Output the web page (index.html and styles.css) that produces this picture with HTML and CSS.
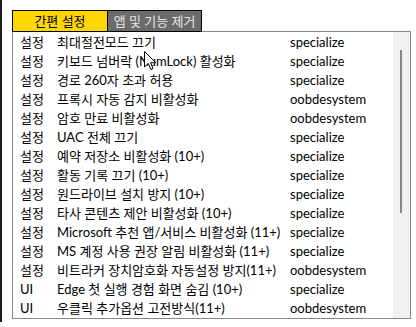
FILE: index.html
```html
<!DOCTYPE html>
<html lang="ko">
<head>
    <meta charset="UTF-8">
    <title>간편 설정</title>
    <link rel="stylesheet" href="styles.css">
</head>
<body>
    <div class="window">
        <div class="tabs">
            <div class="tab active">간편 설정</div>
            <div class="tab">앱 및 기능 제거</div>
        </div>
        <div class="listbox">
            <div class="rows">
                <div class="row"><span>설정</span><span>최대절전모드 끄기</span><span>specialize</span></div>
                <div class="row"><span>설정</span><span>키보드 넘버락 (NumLock) 활성화</span><span>specialize</span></div>
                <div class="row"><span>설정</span><span>경로 260자 초과 허용</span><span>specialize</span></div>
                <div class="row"><span>설정</span><span>프록시 자동 감지 비활성화</span><span>oobdesystem</span></div>
                <div class="row"><span>설정</span><span>암호 만료 비활성화</span><span>oobdesystem</span></div>
                <div class="row"><span>설정</span><span>UAC 전체 끄기</span><span>specialize</span></div>
                <div class="row"><span>설정</span><span>예약 저장소 비활성화 (10+)</span><span>specialize</span></div>
                <div class="row"><span>설정</span><span>활동 기록 끄기 (10+)</span><span>specialize</span></div>
                <div class="row"><span>설정</span><span>원드라이브 설치 방지 (10+)</span><span>specialize</span></div>
                <div class="row"><span>설정</span><span>타사 콘텐츠 제안 비활성화 (10+)</span><span>specialize</span></div>
                <div class="row"><span>설정</span><span>Microsoft 추천 앱/서비스 비활성화 (11+)</span><span>specialize</span></div>
                <div class="row"><span>설정</span><span>MS 계정 사용 권장 알림 비활성화 (11+)</span><span>specialize</span></div>
                <div class="row"><span>설정</span><span>비트라커 장치암호화 자동설정 방지(11+)</span><span>oobdesystem</span></div>
                <div class="row"><span>UI</span><span>Edge 첫 실행 경험 화면 숨김 (10+)</span><span>specialize</span></div>
                <div class="row"><span>UI</span><span>우클릭 추가옵션 고전방식(11+)</span><span>oobdesystem</span></div>
            </div>
            <div class="scrollbar"><div class="thumb"></div></div>
        </div>
    </div>

    <!-- mouse pointer caught in the capture -->
    <svg class="pointer" width="13" height="20" viewBox="0 0 13 20">
        <path d="M0.5 0.5 L0.5 16 L4.3 12.4 L6.8 18.5 L9 17.6 L6.6 11.7 L11.8 11.7 Z" fill="#fff" stroke="#000" stroke-width="1"/>
    </svg>
</body>
</html>
```

FILE: styles.css
```css
body {
    margin: 0;
    background-color: #fff;
    font-family: Lato, "Noto Sans CJK KR", sans-serif;
    color: #000;
}

.window {
    height: 312px;
    padding: 10px 0 0 10px;
    border-left: 2px solid #1c1c1c;
}

.tabs {
    display: flex;
    position: relative;
    z-index: 1;
    margin-bottom: -1px;
}

.tab {
    width: 93px;
    height: 20px;
    line-height: 20px;
    text-align: center;
    font-size: 13px;
    background-color: #6b6b6b;
    color: #e6e6e6;
    border: 1px solid #000;
}

.tab + .tab {
    border-left: none;
}

.tab.active {
    width: 94px;
    background-color: #ffd700;
    color: #000;
}

.listbox {
    display: flex;
    width: 397px;
    height: 286px;
    border: 1px solid #828790;
}

.rows {
    flex: 1;
    padding-top: 1px;
}

.row {
    display: grid;
    grid-template-columns: 37px 233px 1fr;
    padding-left: 7px;
    height: 19px;
    line-height: 19px;
    font-size: 13px;
    white-space: nowrap;
}

.scrollbar {
    width: 17px;
    background-color: #f0f0f0;
    position: relative;
}

.thumb {
    position: absolute;
    left: 7px;
    top: 18px;
    width: 2px;
    height: 163px;
    background-color: #868686;
}

.pointer {
    position: absolute;
    left: 144px;
    top: 51px;
}
```
